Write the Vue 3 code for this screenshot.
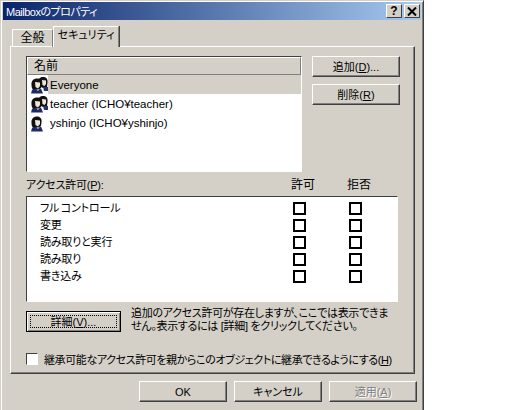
<template>
  <div class="dialog">
    <div class="titlebar">
      <span class="title">Mailboxのプロパティ</span>
      <div class="title-buttons">
        <button class="caption-btn help">?</button>
        <button class="caption-btn close">
          <svg width="10" height="9" viewBox="0 0 10 9"><path d="M1 0.5 L9 8.5 M9 0.5 L1 8.5" stroke="#000" stroke-width="2" fill="none" /></svg>
        </button>
      </div>
    </div>

    <div class="tabs">
      <div class="tab">全般</div>
      <div class="tab active">セキュリティ</div>
    </div>

    <div class="panel">
      <div class="top-row">
        <div class="name-list">
          <div class="list-head">名前</div>
          <div v-for="user in users" :key="user.name" class="user-row">
            <svg class="user-icon" width="18" height="18" viewBox="0 0 18 18">
              <g v-if="user.group">
                <path d="M8 6 C8 2 11 0.5 14 1 C17 1.5 18 4 17.5 7 L17 11 L13 12 L9 10 Z" fill="#111" />
                <path d="M12 4 L16 4.5 L16 8 L14.5 10 L12.5 9 Z" fill="#efe6d8" />
                <path d="M13 11 L18 11 L18 15 L14 15 Z" fill="#27346e" />
              </g>
              <path d="M1.5 9 C1 4.5 4 2.5 7 2.5 C10.5 2.5 12 5 11.5 8 L11 12 L8 14 L3 14 C2 12.5 1.5 11 1.5 9 Z" fill="#111" />
              <path d="M5 6 L10 6.5 L10 10 L8 12.5 L5.5 11 Z" fill="#efe6d8" />
              <path d="M1 17.5 L2 14 L6 12.5 L8 14 L11 12.5 L13 17.5 Z" fill="#1d2a66" />
              <path d="M6.5 13.5 L8 15 L9 13.5 Z" fill="#fff" />
            </svg>
            <span class="user-name" :class="{ selected: user.selected }">{{ user.name }}</span>
          </div>
        </div>
        <div class="side-buttons">
          <button class="btn wide"><span>追加(<u>D</u>)...</span></button>
          <button class="btn wide"><span>削除(<u>R</u>)</span></button>
        </div>
      </div>

      <div class="perm-head">
        <span class="perm-label">アクセス許可(<u>P</u>):</span>
        <span class="perm-col">許可</span>
        <span class="perm-col">拒否</span>
      </div>

      <div class="perm-list">
        <div v-for="perm in permissions" :key="perm" class="perm-row">
          <span class="perm-name">{{ perm }}</span>
          <span class="perm-cell"><i class="box"></i></span>
          <span class="perm-cell"><i class="box"></i></span>
        </div>
      </div>

      <div class="detail-row">
        <button class="btn detail"><span class="focus">詳細(<u>V</u>)...</span></button>
        <p class="detail-text">追加のアクセス許可が存在しますが、ここでは表示できません。表示するには [詳細] をクリックしてください。</p>
      </div>

      <label class="inherit">
        <i class="check"></i>
        <span>継承可能なアクセス許可を親からこのオブジェクトに継承できるようにする(<u>H</u>)</span>
      </label>
    </div>

    <div class="footer">
      <button class="btn">OK</button>
      <button class="btn">キャンセル</button>
      <button class="btn disabled">適用(<u>A</u>)</button>
    </div>
  </div>
</template>

<script setup>
const users = [
  { name: 'Everyone', group: true, selected: true },
  { name: 'teacher (ICHO¥teacher)', group: true },
  { name: 'yshinjo (ICHO¥yshinjo)', group: false },
];

const permissions = ['フル コントロール', '変更', '読み取りと実行', '読み取り', '書き込み'];
</script>

<style>
html,
body {
  background: #fff;
}
</style>

<style scoped>
.dialog {
  width: 424px;
  height: 410px;
  box-sizing: border-box;
  background: #d4d0c8;
  border-top: 1px solid #d4d0c8;
  border-left: 1px solid #d4d0c8;
  border-right: 1px solid #404040;
  box-shadow: inset 1px 1px 0 #fff, inset -1px 0 0 #808080;
  padding: 1px 2px 0 2px;
  font-family: "Liberation Sans", "Noto Sans CJK JP", sans-serif;
  font-size: 11px;
  font-feature-settings: "palt";
  color: #000;
  display: flex;
  flex-direction: column;
}

/* タイトルバー */
.titlebar {
  height: 18px;
  flex: none;
  display: flex;
  align-items: center;
  justify-content: space-between;
  background: linear-gradient(90deg, #0a246a 0%, #a6caf0 100%);
  padding: 0 1px 0 3px;
}

.title {
  color: #fff;
  letter-spacing: -0.5px;
}

.title-buttons {
  display: flex;
  gap: 2px;
}

.caption-btn {
  width: 16px;
  height: 14px;
  padding: 0;
  border: 1px solid;
  border-color: #fff #404040 #404040 #fff;
  background: #d4d0c8;
  font: bold 12px/12px "Liberation Sans", sans-serif;
  display: flex;
  align-items: center;
  justify-content: center;
}

/* タブ */
.tabs {
  display: flex;
  align-items: flex-end;
  height: 27px;
  flex: none;
  padding-left: 9px;
  margin-bottom: -1px;
  position: relative;
  z-index: 1;
}

.tab {
  height: 18px;
  width: 41px;
  box-sizing: border-box;
  border-top: 1px solid #fff;
  border-left: 1px solid #fff;
  border-right: 1px solid #808080;
  text-align: center;
  line-height: 17px;
  font-size: 12px;
  white-space: nowrap;
}

.tab.active {
  height: 21px;
  width: 66px;
  background: #d4d0c8;
  box-shadow: 1px 0 0 #404040;
  line-height: 17px;
  font-size: 11px;
}

/* パネル */
.panel {
  width: 405px;
  height: 328px;
  flex: none;
  box-sizing: border-box;
  margin-left: 7px;
  border-top: 1px solid #fff;
  border-left: 1px solid #fff;
  border-right: 1px solid #404040;
  border-bottom: 1px solid #404040;
  box-shadow: inset -1px -1px 0 #808080;
  padding: 9px 0 0 15px;
  display: flex;
  flex-direction: column;
}

.top-row {
  display: flex;
  flex: none;
  gap: 10px;
}

.name-list {
  width: 276px;
  height: 116px;
  box-sizing: border-box;
  background: #fff;
  border: 1px solid;
  border-color: #404040 #fff #fff #404040;
}

.list-head {
  height: 18px;
  line-height: 17px;
  box-sizing: border-box;
  background: #d4d0c8;
  border: 1px solid;
  border-color: #fff #808080 #808080 #fff;
  padding-left: 6px;
  font-size: 12px;
}

.user-row {
  height: 19px;
  display: flex;
  align-items: center;
}

.user-icon {
  flex: none;
  margin-left: 3px;
}

.user-name {
  flex: 1;
  height: 19px;
  line-height: 20px;
  padding-left: 2px;
  font-size: 11.5px;
}

.user-name.selected {
  background: #d4d0c8;
}

.side-buttons {
  display: flex;
  flex-direction: column;
  gap: 7px;
}

.btn {
  width: 88px;
  height: 21px;
  padding: 0;
  background: #d4d0c8;
  border: 1px solid;
  border-color: #fff #404040 #404040 #fff;
  box-shadow: inset -1px -1px 0 #808080;
  font-family: inherit;
  font-size: 11px;
  font-feature-settings: inherit;
  line-height: 18px;
  color: #000;
}

.btn.disabled {
  color: #808080;
  text-shadow: 1px 1px 0 #fff;
}

/* アクセス許可 */
.perm-head {
  display: flex;
  flex: none;
  height: 24px;
  align-items: flex-end;
  padding-bottom: 2px;
  box-sizing: border-box;
  line-height: 17px;
}

.perm-label {
  width: 249px;
  letter-spacing: -0.2px;
}

.perm-col {
  width: 56px;
  text-align: center;
  font-size: 12px;
}

.perm-list {
  width: 372px;
  height: 106px;
  flex: none;
  box-sizing: border-box;
  background: #fff;
  border: 1px solid;
  border-color: #404040 #fff #fff #404040;
  padding-top: 3px;
}

.perm-row {
  height: 17px;
  display: flex;
  align-items: center;
  padding-left: 13px;
}

.perm-name {
  width: 231px;
  line-height: 17px;
  letter-spacing: -0.2px;
  word-spacing: -1px;
}

.perm-cell {
  width: 56px;
  display: flex;
  justify-content: center;
}

.box {
  display: block;
  width: 13px;
  height: 13px;
  box-sizing: border-box;
  border: 2px solid #000;
  background: #fff;
}

.detail-row {
  display: flex;
  flex: none;
  gap: 10px;
  margin-top: 9px;
}

.btn.detail {
  width: 95px;
  height: 21px;
  flex: none;
  border-color: #000;
  box-shadow: inset 1px 1px 0 #fff, inset -1px -1px 0 #808080;
  display: flex;
  padding: 3px;
}

.focus {
  flex: 1;
  outline: 1px dotted #000;
  outline-offset: -1px;
  line-height: 14px;
}

.detail-text {
  margin: -4px 0 0;
  width: 264px;
  line-height: 13px;
  letter-spacing: -0.3px;
}

.inherit {
  display: flex;
  flex: none;
  align-items: center;
  gap: 6px;
  margin-top: 18px;
  white-space: nowrap;
  letter-spacing: -0.4px;
}

.check {
  display: block;
  flex: none;
  width: 12px;
  height: 12px;
  box-sizing: border-box;
  background: #fff;
  border: 1px solid;
  border-color: #404040 #fff #fff #404040;
  box-shadow: 1px 1px 0 #d4d0c8;
}

/* 下部ボタン */
.footer {
  display: flex;
  gap: 7px;
  padding: 7px 0 0 136px;
}
</style>
